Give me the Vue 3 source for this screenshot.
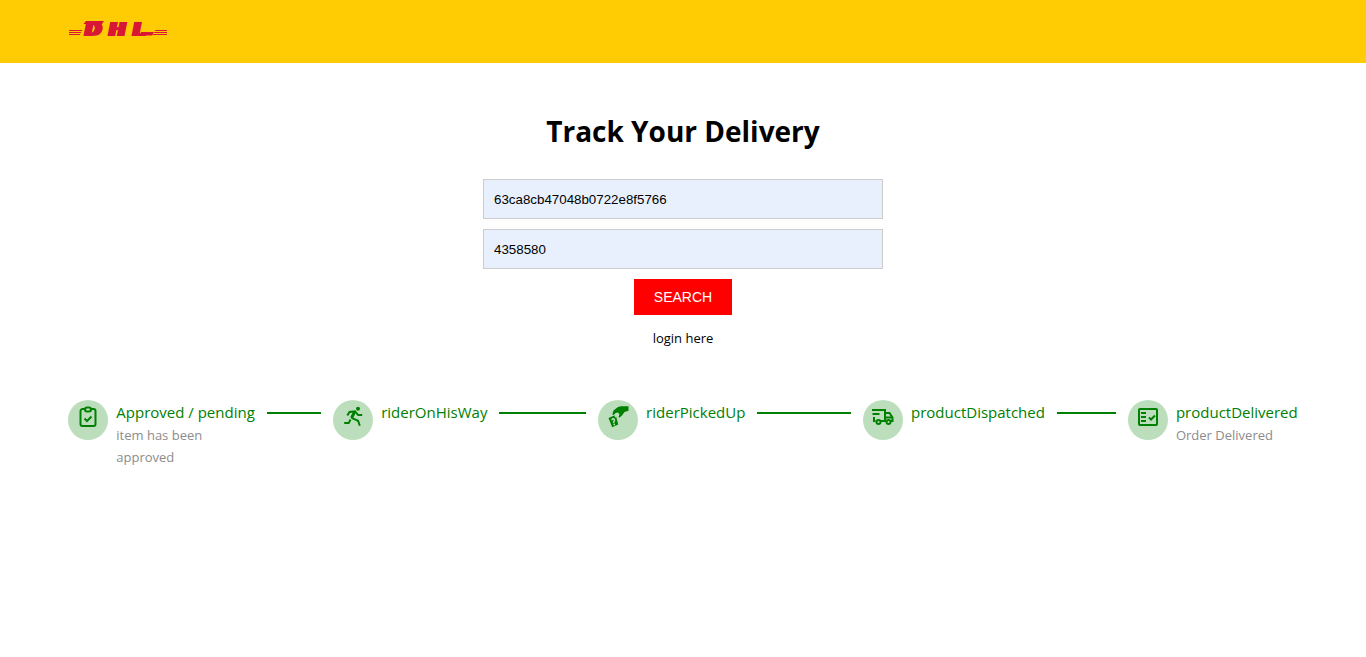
<script setup>
import { ref } from 'vue'

const orderId = ref('63ca8cb47048b0722e8f5766')
const pin = ref('4358580')

const steps = [
  { icon: 'clipboard', title: 'Approved / pending', description: 'item has been approved' },
  { icon: 'runner', title: 'riderOnHisWay' },
  { icon: 'pickup', title: 'riderPickedUp' },
  { icon: 'truck', title: 'productDispatched' },
  { icon: 'checklist', title: 'productDelivered', description: 'Order Delivered' },
]
</script>

<template>
  <div class="page">
    <header class="header">
      <a class="brand" href="#" aria-label="DHL">
        <svg class="logo" viewBox="0 0 100 18" width="100" height="18">
          <filter id="heavy" x="-10%" y="-10%" width="120%" height="120%">
            <feMorphology operator="dilate" radius="2 0.01" />
          </filter>
          <path d="M1 10h13.500l-1 1H1zM1 12h12.500l-1 1H1zM1 14h11.500l-.6 1H1zM87.500 10H99v1H87zM86.500 12H99v1H86zM85 14h14v1H84.500z" />
          <path d="M18 1h18l-2 3H15.500zM73 12h13l-2 3.500H72z" />
          <text x="17 41 65" y="16" filter="url(#heavy)">DHL</text>
        </svg>
      </a>
    </header>

    <main class="content">
      <h1 class="heading">Track Your Delivery</h1>
      <form class="form" @submit.prevent>
        <input v-model="orderId" class="field" type="text" aria-label="Order ID" />
        <input v-model="pin" class="field" type="text" aria-label="Tracking PIN" />
        <button class="search" type="submit">SEARCH</button>
      </form>
      <a class="login" href="#">login here</a>

      <ol class="steps">
        <li v-for="step in steps" :key="step.icon" class="step">
          <span class="badge">
            <svg v-if="step.icon === 'clipboard'" class="icon line" viewBox="0 0 24 24">
              <path d="M9 4H6.500a2 2 0 0 0-2 2v13a2 2 0 0 0 2 2h11a2 2 0 0 0 2-2V6a2 2 0 0 0-2-2H15" />
              <rect x="9" y="2.500" width="6" height="4" rx="2" />
              <path d="m8.500 13.500 2.500 2.500 4.500-4.500" />
            </svg>
            <svg v-else-if="step.icon === 'runner'" class="icon line" viewBox="0 0 24 24">
              <circle cx="17" cy="3.800" r="2" class="solid" />
              <path d="M6.300 10.500 8.500 7l5.500-.6 3.200 3.700h4" />
              <path d="m13.500 7-3 6" class="thick" />
              <path d="m10.500 12.800 6.600 3 1.700 5M9.500 14.500l-1.800 3.600H3.200" />
            </svg>
            <svg v-else-if="step.icon === 'pickup'" class="icon" viewBox="0 0 24 24">
              <path d="M22.500 1.300v4.500l-4 1.200-2.500 3.500-2.700 2.200-.7-.7.900-3-1.700-1.500-2 .6L7.500 10l-1.200-.5 1.200-4 4.500-3.500 3-.8z" />
              <path fill-rule="evenodd" d="m2.500 13 5.800-2.600.8.700-.6 1 1 .4.700-.7 2.100 7.700L6.200 22.300zM5.300 14l.4 1.500 1.700-.7.500.8-1 .9.400 1.800 1.300-.4-.3-1 1-1.100-.8-2.500-1.700-.2zM7.300 19l.5 1.500 1.400-.5-.5-1.500z" />
            </svg>
            <svg v-else-if="step.icon === 'truck'" class="icon line" viewBox="0 0 24 24">
              <path d="M1 5h13v11h-3.500M1.500 9h7M3 12v4h1.500M14 8h4.500l3 4.500V16H20M14 12.500h7" />
              <circle cx="7.500" cy="17" r="2" />
              <circle cx="17.500" cy="17" r="2" />
              <path d="M10 16h5.500" />
            </svg>
            <svg v-else class="icon line" viewBox="0 0 24 24">
              <rect x="3" y="4" width="18" height="16" rx="1" />
              <path d="M5 8h5M5 12h5M5 16h5m3-3.500 2 2 4-4" />
            </svg>
          </span>
          <div class="text">
            <div class="title">{{ step.title }}</div>
            <div v-if="step.description" class="description">{{ step.description }}</div>
          </div>
        </li>
      </ol>
    </main>
  </div>
</template>

<style>
body {
  margin: 0;
  background: #fff;
}
</style>

<style scoped>
.page {
  font-family: "Segoe UI", "Open Sans", "Noto Sans", sans-serif;
  color: #000;
}
.header {
  box-sizing: border-box;
  height: 63px;
  padding: 20px 5%;
  background: #ffcc03;
}
.brand {
  display: inline-block;
}
.logo {
  display: block;
  overflow: visible;
  fill: #d81635;
}
.logo text {
  font: italic bold 20px "DejaVu Sans", sans-serif;
}
.content {
  display: flex;
  flex-direction: column;
  align-items: center;
  padding: 48px 5% 0;
}
.heading {
  margin: 0;
  font-size: 28px;
  font-weight: 700;
  line-height: 40px;
}
.form {
  display: flex;
  flex-direction: column;
  align-items: center;
  gap: 10px;
  width: 400px;
  max-width: 100%;
  margin-top: 28px;
}
.field {
  box-sizing: border-box;
  width: 100%;
  height: 40px;
  padding: 0 10px;
  border: 1px solid #ccc;
  border-radius: 0;
  background: #e8f0fe;
  color: #000;
  font-family: "Liberation Sans", Arial, sans-serif;
}
.search {
  height: 36px;
  padding: 0 20px;
  border: 0;
  background: #f00;
  color: #fff;
  font-family: "Liberation Sans", Arial, sans-serif;
  font-size: 14px;
}
.login {
  margin-top: 12px;
  color: #000;
  font-size: 13px;
  line-height: 22px;
  text-decoration: none;
}
.steps {
  display: flex;
  align-self: stretch;
  margin: 51px 0 0;
  padding: 0;
  list-style: none;
}
.step {
  display: flex;
  flex: 1;
  gap: 8px;
  min-width: 0;
}
.step:last-child {
  flex: none;
}
.badge {
  flex: none;
  box-sizing: border-box;
  width: 40px;
  height: 40px;
  padding: 5px 8px;
  border-radius: 50%;
  background: #bddebd;
}
.icon {
  display: block;
  width: 24px;
  height: 24px;
  fill: #008000;
}
.line {
  fill: none;
  stroke: #008000;
  stroke-width: 2;
}
.solid {
  fill: #008000;
  stroke: none;
}
.thick {
  stroke-width: 3;
}
.text {
  flex: 1;
  min-width: 0;
}
.title {
  display: flex;
  align-items: center;
  gap: 12px;
  color: #008000;
  font-size: 15px;
  line-height: 24px;
  white-space: nowrap;
}
.step:not(:last-child) .title::after {
  content: "";
  flex: 1;
  height: 2px;
  margin: 2px 12px 0 0;
  background: #008000;
}
.description {
  max-width: 140px;
  color: #8c8c8c;
  font-size: 13px;
  line-height: 22px;
}
</style>
